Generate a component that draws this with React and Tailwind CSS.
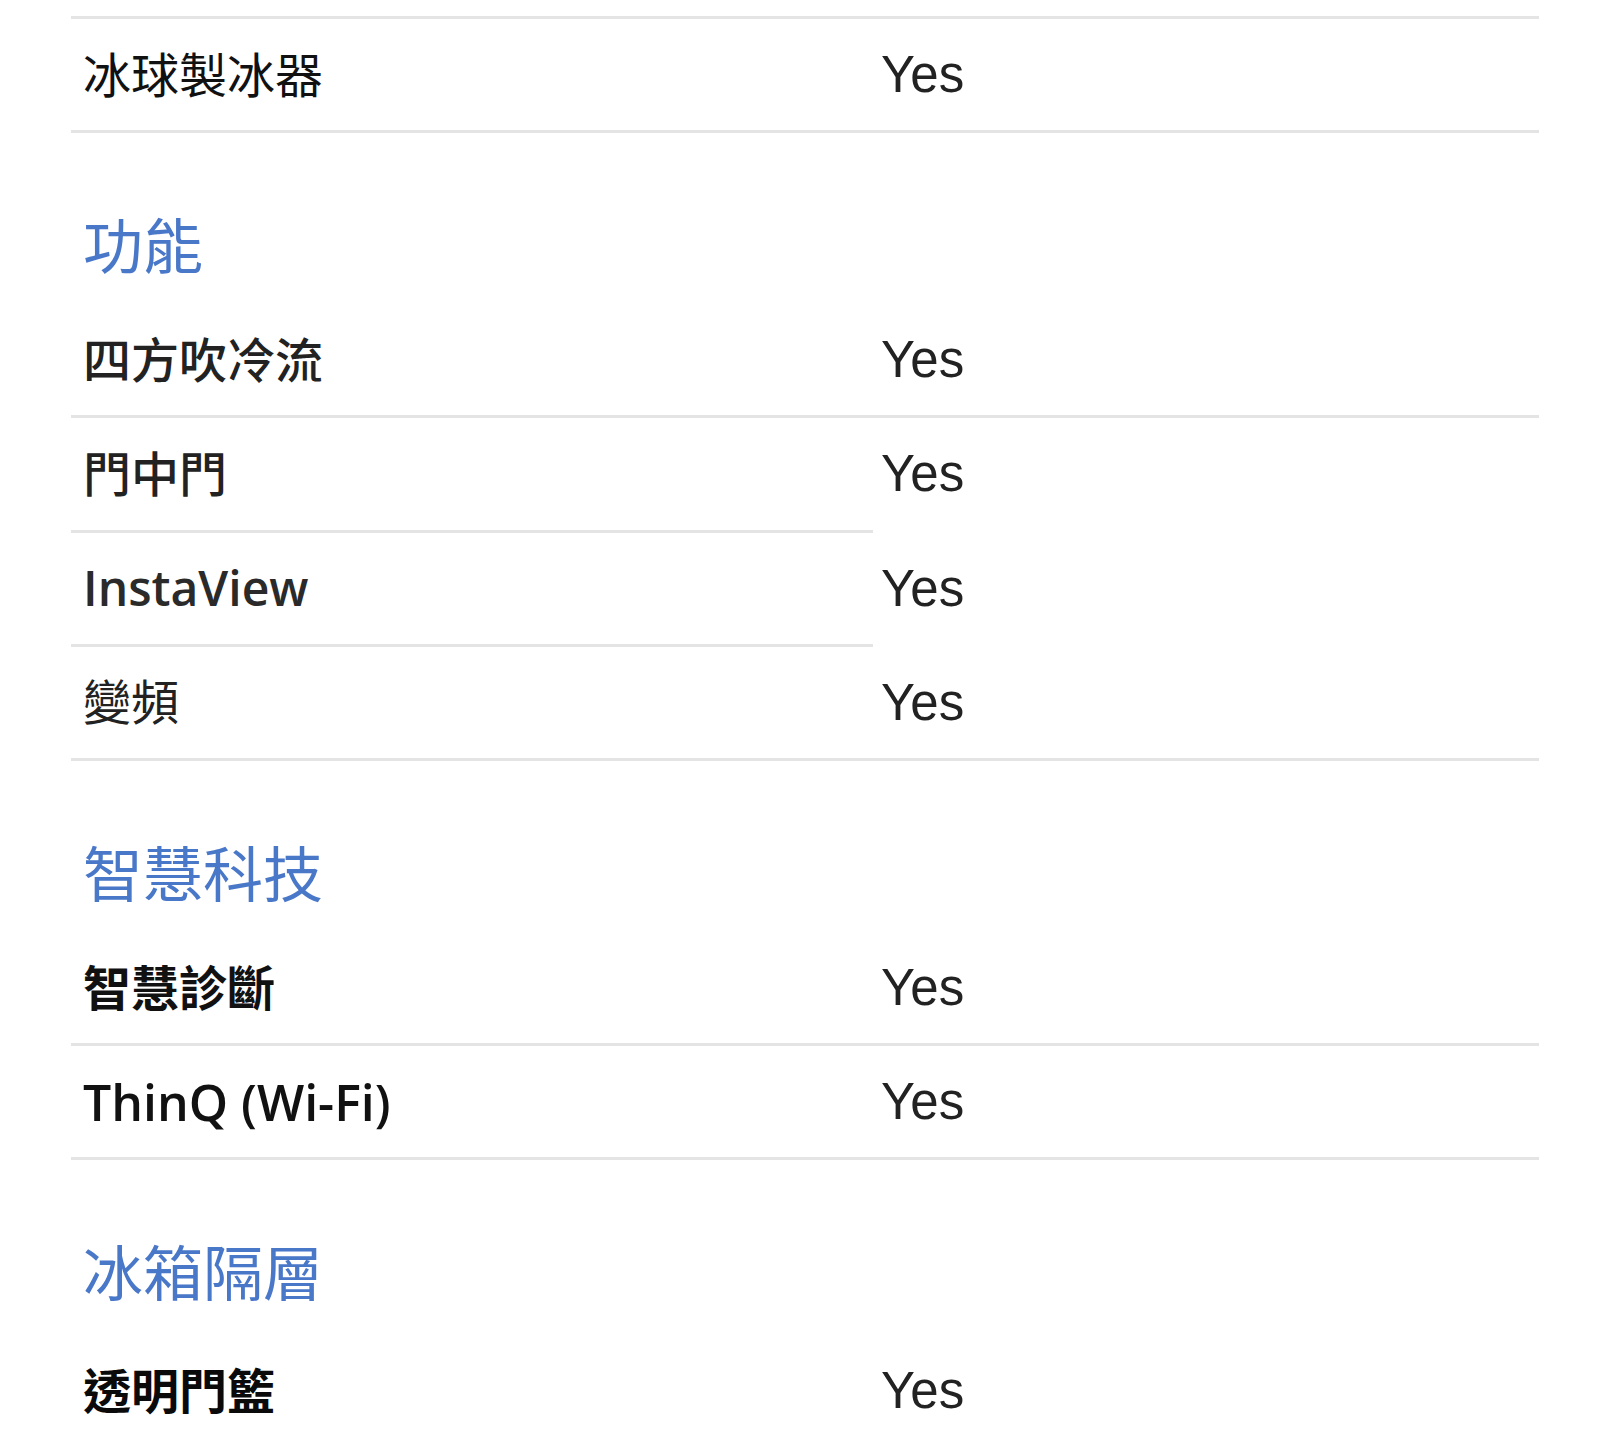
import React from 'react'

const labelFont = { fontFamily: '"Open Sans", "Noto Sans CJK TC", sans-serif' }

const sections = [
    {
        title: null,
        rows: [{ label: '冰球製冰器', weight: 'font-normal', color: 'text-[#111111]', full: true }],
    },
    {
        title: '功能',
        gap: 'pb-[28px]',
        rows: [
            { label: '四方吹冷流', weight: 'font-medium', color: 'text-[#222222]', full: true },
            { label: '門中門', weight: 'font-medium', color: 'text-[#222222]', full: false },
            { label: 'InstaView', weight: 'font-semibold', color: 'text-[#2a2a2a]', full: false, size: 'text-[48px]' },
            { label: '變頻', weight: 'font-normal', color: 'text-[#222222]', full: true },
        ],
    },
    {
        title: '智慧科技',
        gap: 'pb-[28px]',
        rows: [
            { label: '智慧診斷', weight: 'font-bold', color: 'text-[#111111]', full: true },
            { label: 'ThinQ (Wi-Fi)', weight: 'font-semibold', color: 'text-[#111111]', full: true, size: 'text-[50px]' },
        ],
    },
    {
        title: '冰箱隔層',
        gap: 'pb-[32px]',
        rows: [{ label: '透明門籃', weight: 'font-bold', color: 'text-[#0a0a0a]', full: false, last: true }],
    },
]

const SpecRow = ({ label, weight, color, full, last, size = 'text-[48px]' }) => {
    return (
        <div className="flex">
            <div
                className={`w-[802px] h-[114.2px] flex items-center pl-[12px] leading-none ${size} ${weight} ${color} ${last ? 'border-b-[3px] border-transparent' : 'border-b-[3px] border-[#e4e4e4]'}`}
                style={labelFont}
            >
                {label}
            </div>
            <div
                className={`flex-1 h-[114.2px] flex items-center pl-[8px] text-[51px] leading-none text-[#222222] font-['Liberation_Sans',Arial,sans-serif] border-b-[3px] ${full ? 'border-[#e4e4e4]' : 'border-transparent'}`}
            >
                Yes
            </div>
        </div>
    )
}

const App = () => {
    return (
        <div className="w-[1600px] h-[1441px] bg-white overflow-hidden">
            <div className="ml-[71px] w-[1468px]">
                {/* top divider belongs to the row above, cut off */}
                <div className="h-[19px] border-b-[3px] border-[#e4e4e4]" />
                {sections.map((section, i) => (
                    <div key={i}>
                        {section.title && (
                            <h2
                                className={`pt-[83px] ${section.gap} pl-[12px] text-[60px] leading-[60px] font-normal text-[#4a78c9]`}
                                style={labelFont}
                            >
                                {section.title}
                            </h2>
                        )}
                        {section.rows.map((row) => (
                            <SpecRow key={row.label} {...row} />
                        ))}
                    </div>
                ))}
            </div>
        </div>
    )
}

export default App
